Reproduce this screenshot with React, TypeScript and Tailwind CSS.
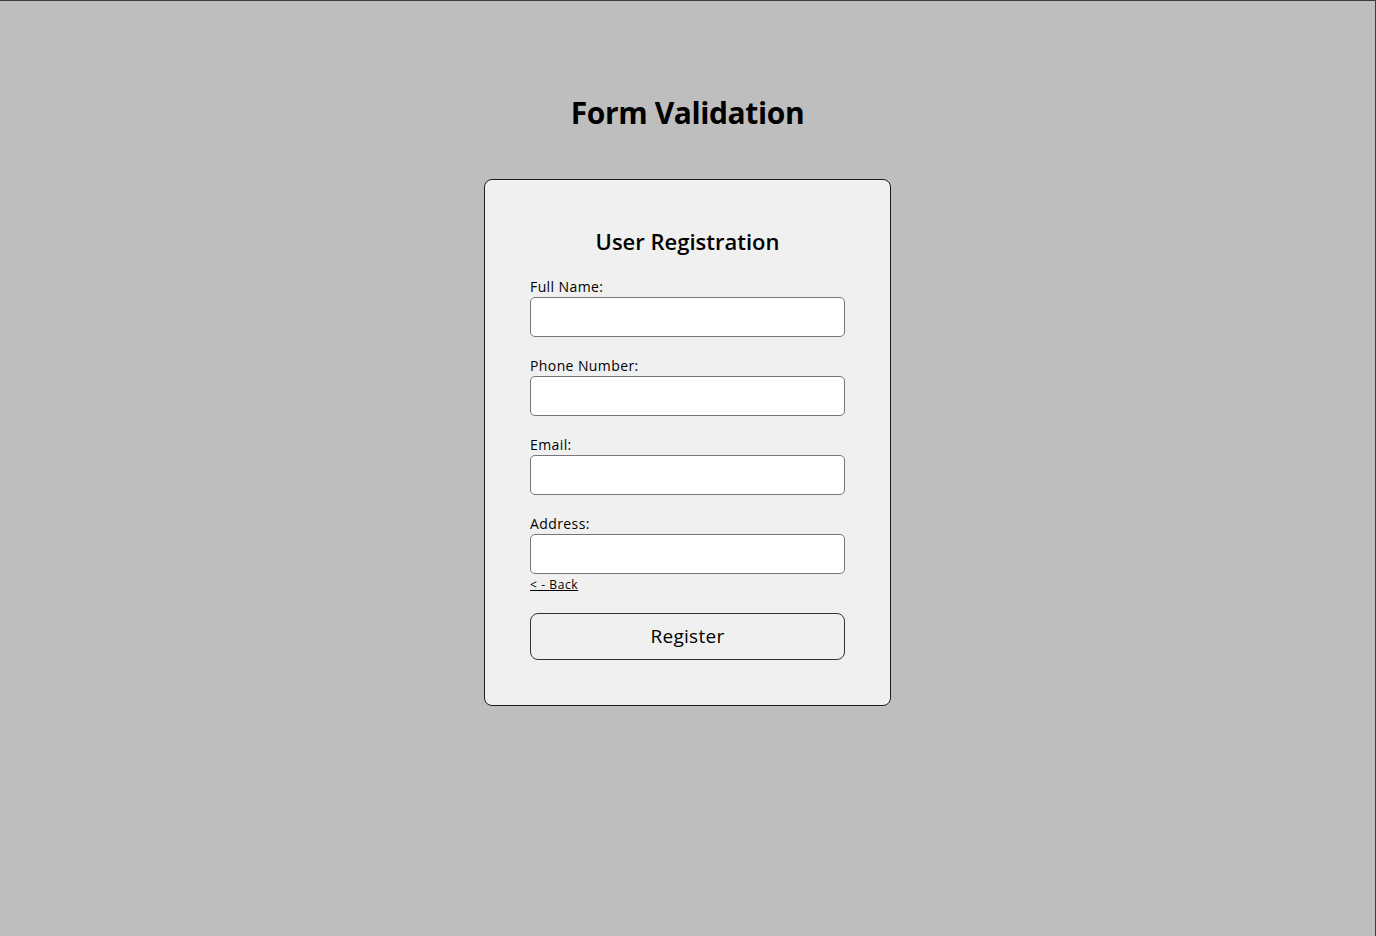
import { useState, type FormEvent } from 'react';

type Field = { id: string; label: string; type: string };

const fields: Field[] = [
  { id: 'name', label: 'Full Name:', type: 'text' },
  { id: 'phone', label: 'Phone Number:', type: 'tel' },
  { id: 'email', label: 'Email:', type: 'email' },
  { id: 'address', label: 'Address:', type: 'text' },
];

function App() {
  const [values, setValues] = useState<Record<string, string>>({});

  const handleSubmit = (e: FormEvent) => {
    e.preventDefault();
  };

  return (
    <div className="min-h-screen bg-[#bebebe] border-t border-r border-[#3c3c3c] font-['Open_Sans',sans-serif] text-black">
      <h1 className="pt-[89px] text-center text-[30px] leading-[45px] font-bold tracking-[-0.4px]">
        Form Validation
      </h1>

      <form
        onSubmit={handleSubmit}
        className="mx-auto mt-[44px] w-[407px] rounded-lg border border-[#1e1e1e] bg-[#f0f0f0] px-[45px] py-[45px]"
      >
        <h2 className="text-center text-[22px] leading-[33px] font-semibold">User Registration</h2>

        <div className="mt-[18px] flex flex-col gap-[18px]">
          {fields.map((f) => (
            <div key={f.id} className="flex flex-col">
              <label htmlFor={f.id} className="text-[14px] leading-[21px] tracking-[0.4px]">
                {f.label}
              </label>
              <input
                id={f.id}
                type={f.type}
                value={values[f.id] || ''}
                onChange={(e) => setValues({ ...values, [f.id]: e.target.value })}
                className="h-[40px] w-full rounded-[5px] border border-[#767676] bg-white px-2 text-[14px] outline-none"
              />
            </div>
          ))}
        </div>

        <a href="#" className="mt-[2px] block w-fit text-[12px] leading-[18px] tracking-[0.6px] text-black underline">
          &lt; - Back
        </a>

        <button
          type="submit"
          className="mt-[19px] block h-[47px] w-full rounded-lg border border-[#333] bg-[#f0f0f0] text-[19px] tracking-[0.3px]"
        >
          Register
        </button>
      </form>
    </div>
  );
}

export default App;
